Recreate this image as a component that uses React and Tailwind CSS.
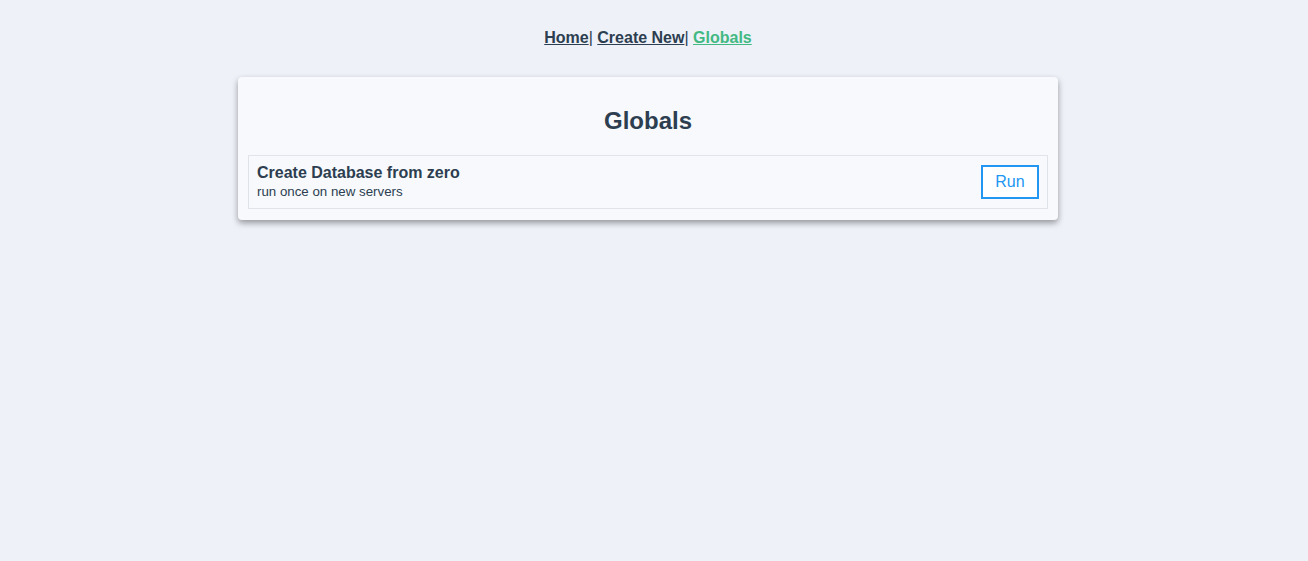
export default function App() {
  return (
    <div
      className="min-h-[561px] w-full bg-[#eef1f8] pr-[12px] text-[#2c3e50]"
      style={{ fontFamily: '"Liberation Sans", Arial, sans-serif' }}
    >
      <nav className="pt-[29px] text-center text-[16px] font-bold leading-[18px]">
        <a href="#" className="underline text-[#2c3e50]">Home</a>
        <span className="font-normal">|</span>{" "}
        <a href="#" className="underline text-[#2c3e50]">Create New</a>
        <span className="font-normal">|</span>{" "}
        <a href="#" className="underline text-[#42b983]">Globals</a>
      </nav>
      <div className="mx-auto mt-[30px] w-[820px] rounded-[4px] bg-[#f7f9fc] px-[10px] pt-[10px] pb-[11px] shadow-[0_3px_6px_rgba(0,0,0,0.38)]">
        <h2 className="mt-[20px] mb-[20px] text-center text-[24px] font-bold leading-[28px]">Globals</h2>
        <div className="flex items-center justify-between border border-[#e1e3ea] py-[8px] pl-[8px] pr-[8px]">
          <div>
            <div className="text-[16px] font-bold leading-[18px]">Create Database from zero</div>
            <div className="mt-[2px] text-[13.3px] leading-[16px]">run once on new servers</div>
          </div>
          <button className="h-[34px] w-[58px] border-2 border-[#2196f3] bg-white text-[16px] text-[#2196f3]">
            Run
          </button>
        </div>
      </div>
    </div>
  );
}
